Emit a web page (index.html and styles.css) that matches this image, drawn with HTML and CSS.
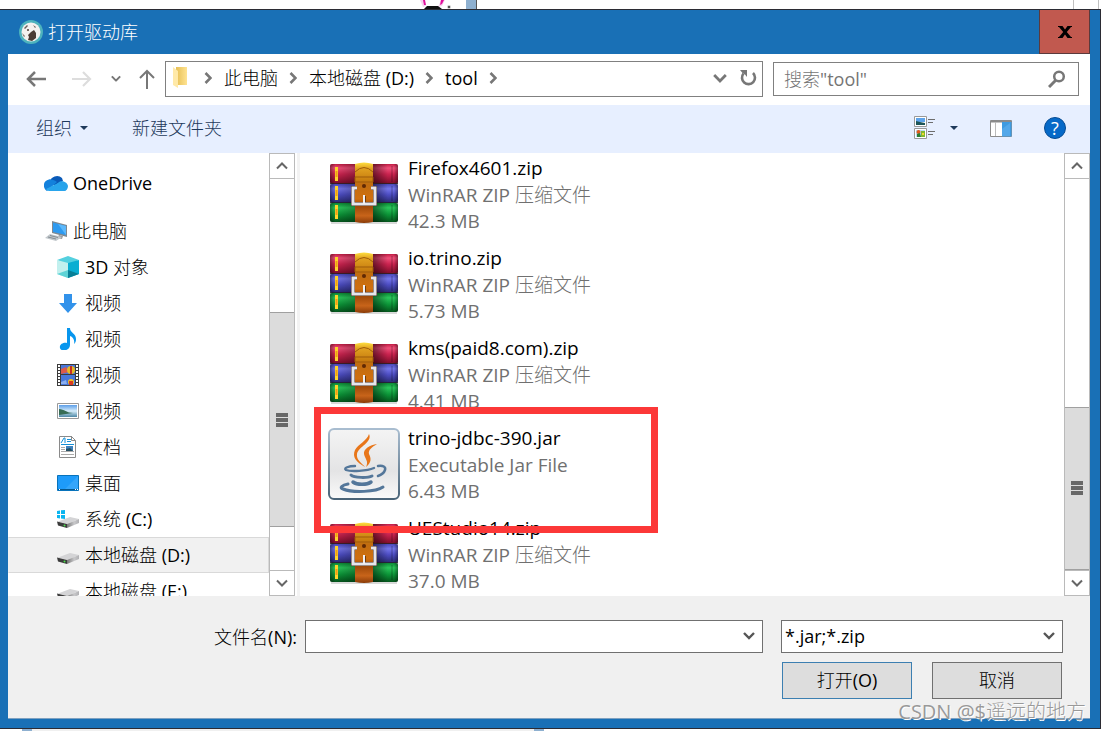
FILE: index.html
```html
<!DOCTYPE html>
<html lang="zh-CN">
<head>
<meta charset="utf-8">
<title>打开驱动库</title>
<link rel="stylesheet" href="styles.css">
</head>
<body>
<svg class="defs" aria-hidden="true">
  <defs>
    <linearGradient id="red" x1="0" y1="0" x2="0" y2="1"><stop offset="0" stop-color="#c01c44"/><stop offset=".2" stop-color="#f0507a"/><stop offset=".5" stop-color="#cc2450"/><stop offset="1" stop-color="#7a0c28"/></linearGradient>
    <linearGradient id="blue" x1="0" y1="0" x2="0" y2="1"><stop offset="0" stop-color="#4848b8"/><stop offset=".25" stop-color="#7475ea"/><stop offset=".55" stop-color="#4e4ec4"/><stop offset="1" stop-color="#28286e"/></linearGradient>
    <linearGradient id="green" x1="0" y1="0" x2="0" y2="1"><stop offset="0" stop-color="#0b8a34"/><stop offset=".25" stop-color="#2ac65a"/><stop offset=".6" stop-color="#0c9538"/><stop offset="1" stop-color="#04561c"/></linearGradient>
    <linearGradient id="shade"><stop offset="0" stop-color="#000" stop-opacity=".4"/><stop offset=".08" stop-color="#000" stop-opacity="0"/><stop offset=".3" stop-color="#000" stop-opacity=".2"/><stop offset=".62" stop-color="#000" stop-opacity=".5"/><stop offset=".85" stop-color="#000" stop-opacity="0"/><stop offset=".94" stop-color="#000" stop-opacity="0"/><stop offset="1" stop-color="#000" stop-opacity=".4"/></linearGradient>
    <linearGradient id="strap" x1="0" y1="0" x2="0" y2="1"><stop offset="0" stop-color="#ffe040"/><stop offset=".1" stop-color="#e0a020"/><stop offset=".28" stop-color="#c98010"/><stop offset=".36" stop-color="#c06c10"/><stop offset=".6" stop-color="#d0700f"/><stop offset=".72" stop-color="#9c4808"/><stop offset=".88" stop-color="#c8641a"/><stop offset="1" stop-color="#8a3c08"/></linearGradient>
    <linearGradient id="javabox" x1="0" y1="0" x2="0" y2="1"><stop offset="0" stop-color="#f4f4f4"/><stop offset=".6" stop-color="#e4e4e5"/><stop offset="1" stop-color="#fafafa"/></linearGradient>
    <linearGradient id="javaedge" x1="0" y1="0" x2="0" y2="1"><stop offset="0" stop-color="#a9bdd0"/><stop offset="1" stop-color="#4a6478"/></linearGradient>
    <linearGradient id="disk"><stop offset="0" stop-color="#777"/><stop offset=".6" stop-color="#c8c8ca"/><stop offset="1" stop-color="#b0b0b3"/></linearGradient>
    <linearGradient id="sky" x1="0" y1="0" x2="0" y2="1"><stop offset="0" stop-color="#5c9ee8"/><stop offset=".5" stop-color="#d5ecfa"/><stop offset="1" stop-color="#4d87a5"/></linearGradient>
    <linearGradient id="folder"><stop offset="0" stop-color="#e6bf55"/><stop offset="1" stop-color="#ffe391"/></linearGradient>
  </defs>
  <symbol id="rar" viewBox="0 0 72 72">
    <path d="M3 64h66v2H3z" fill="#000" opacity=".15"/>
    <rect x="2" y="6" width="68" height="20" rx="2" fill="url(#red)"/>
    <rect x="2" y="26" width="68" height="19" rx="2" fill="url(#blue)"/>
    <rect x="2" y="45" width="68" height="19" rx="2" fill="url(#green)"/>
    <rect x="2" y="6" width="68" height="58" rx="2" fill="url(#shade)"/>
    <path d="M2 25h68v1H2zM2 44h68v1H2z" fill="#222" opacity=".7"/>
    <path d="M64 8v16M64 28v15M64 47v15" stroke="#000" opacity=".3"/>
    <path d="M8.500 9v14M8.500 28v14M8.500 47v14" stroke="#ffd52b" stroke-width="3"/>
    <path d="M7.500 13h2v6h-2zM7.500 32h2v6h-2zM7.500 51h2v6h-2z" fill="#f09d18"/>
    <path d="M27 6q9-3 18 0v58q-9 2-18 0z" fill="url(#strap)"/>
    <path d="M27 14q9-9 18 0M27 19h18v5H27z" fill="none" stroke="#9d5b0a" stroke-width="1"/>
    <circle cx="36" cy="28" r="2" fill="#5f2904"/>
    <path d="M29 30h-4v16h22V30h-4" fill="none" stroke="#4a3020" stroke-width="4"/>
    <path d="M29 30h-4v16h22V30h-4" fill="none" stroke="#e6e6ec" stroke-width="3"/>
    <path d="M36 37v9" stroke="#f0f0f4" stroke-width="2"/>
    <path d="M37.500 38v6" stroke="#6a3a10" stroke-width="1"/>
  </symbol>
  <symbol id="java" viewBox="0 0 72 72">
    <rect x="1" y="1" width="70" height="70" rx="5" fill="url(#javabox)" stroke="url(#javaedge)" stroke-width="2"/>
    <path d="M41 6c4 8-11 13-12 20-1 6 5 9 8 13-9-5-13-10-10-17 3-6 12-9 14-16z" fill="#e8761a"/>
    <path d="M49 16c-7 1-14 5-13 10 1 5 5 7 2 13 6-5 5-9 3-13-1-4 3-7 8-10z" fill="#e8761a"/>
    <g fill="none" stroke="#54779a" stroke-linecap="round">
      <path d="M27 38c-6 0-12 2-9 4 5 2 21 1 28-2" stroke-width="2.400"/>
      <path d="M23 47c3 3 17 3 21 1" stroke-width="3"/>
      <path d="M25 54c4 3 14 3 18 0" stroke-width="3.500"/>
      <path d="M50 38c5-1 8 1 7 4-1 3-4 5-7 6" stroke-width="2.500"/>
      <path d="M20 56c-6 1-9 4-5 5 10 4 33 3 40-2" stroke-width="3"/>
    </g>
  </symbol>
  <symbol id="drive" viewBox="0 0 22 22">
    <path d="M1 13.500 13 9l9 2-12 5z" fill="#d4d4d6"/>
    <path d="M10 16l12-5v4l-12 5z" fill="url(#disk)"/>
    <path d="M0 13.500 10 16v4L1 17.500z" fill="#3b3b3b"/>
    <circle cx="7.500" cy="17.500" r="1" fill="#4be04b"/>
  </symbol>
  <symbol id="chev-down" viewBox="0 0 12 8"><path d="M1 1.500 6 6.500l5-5" fill="none" stroke="currentColor" stroke-width="2.400"/></symbol>
  <symbol id="chev-thin" viewBox="0 0 12 8"><path d="M1 1.500 6 6.500l5-5" fill="none" stroke="currentColor" stroke-width="2"/></symbol>
  <symbol id="chev-up" viewBox="0 0 12 8"><path d="M1 6.500 6 1.500l5 5" fill="none" stroke="currentColor" stroke-width="2"/></symbol>
  <symbol id="chev-right" viewBox="0 0 8 12"><path d="M1.500 1 6.500 6l-5 5" fill="none" stroke="currentColor" stroke-width="2.600"/></symbol>
  <symbol id="triangle" viewBox="0 0 8 4"><path d="M0 0h8L4 4z" fill="currentColor"/></symbol>
</svg>

<div class="backdrop-top">
  <svg class="rabbit" viewBox="0 0 32 9"><path d="M0 0h4l2 6-3 1zM18 7l3-7h4l-3 6z" fill="#f7d3ef"/><path d="M3 0h2l1 5H4zM20 5l1-5h3l-2 4z" fill="#e0109c"/><path d="M4 9l3-3h11l4 3z" fill="#111"/><circle cx="29" cy="7" r="2" fill="#ccc"/><path d="M28 6h2v2h-2z" fill="#555"/></svg>
  <span class="backdrop-edge"></span>
  <span class="backdrop-rail"></span>
</div>

<div class="window">
  <header class="titlebar">
    <svg class="app-icon" viewBox="0 0 24 24"><circle cx="12" cy="12" r="12" fill="#4db3bd"/><circle cx="12" cy="12" r="9.500" fill="#f3f1ef"/><path d="M9 15l3-3 3-2 2 3v5l-4 3-4-1 1-3z" fill="#4b3b34"/><path d="M5 8l3-3 1 1-3 3zM14 5l3 2-1 1zM3 13l2 4 1-1z" fill="#69605b"/><circle cx="9" cy="10" r="1" fill="#4b3b34"/></svg>
    <h1 class="title">打开驱动库</h1>
    <button class="close" aria-label="关闭"><svg viewBox="0 0 14 12"><path d="M0 0h4.500L7 3.500 9.500 0H14v1h-1L8.800 6l4.200 5h1v1H9.500L7 8.500 4.500 12H0v-1h1l4.200-5L1 1H0z" fill="#000"/></svg></button>
  </header>

  <div class="client">
    <nav class="navbar">
      <button class="nav-btn back" aria-label="后退"><svg viewBox="0 0 20 16"><path d="M9 1 2 8l7 7M2 8h18" fill="none" stroke="currentColor" stroke-width="2.500"/></svg></button>
      <button class="nav-btn forward" aria-label="前进"><svg viewBox="0 0 20 16"><path d="M11 1l7 7-7 7M18 8H0" fill="none" stroke="currentColor" stroke-width="2.200"/></svg></button>
      <button class="nav-btn recent" aria-label="最近位置"><svg viewBox="0 0 12 8"><use href="#chev-down"/></svg></button>
      <button class="nav-btn up" aria-label="上移"><svg viewBox="0 0 16 20"><path d="M1 9l7-7 7 7M8 2v18" fill="none" stroke="currentColor" stroke-width="2"/></svg></button>
      <div class="address">
        <svg class="folder" viewBox="0 0 14 21"><path d="M3 0h11v18H3z" fill="url(#folder)"/><path d="M0 0l5 4v17l-5-3z" fill="#ffe9a8"/></svg>
        <svg class="sep"><use href="#chev-right"/></svg>
        <a href="#pc">此电脑</a>
        <svg class="sep"><use href="#chev-right"/></svg>
        <a href="#d">本地磁盘 (D:)</a>
        <svg class="sep"><use href="#chev-right"/></svg>
        <a href="#tool">tool</a>
        <svg class="sep"><use href="#chev-right"/></svg>
        <button class="addr-btn history" aria-label="历史记录"><svg class="wide-chev"><use href="#chev-down"/></svg></button>
        <button class="addr-btn" aria-label="刷新"><svg class="refresh" viewBox="0 0 17 17"><path d="M3.500 4.500A6.500 6.500 0 1 0 13 4" fill="none" stroke="currentColor" stroke-width="2.600"/><path d="M0 1h7v7L5 5.500 2.500 4z" fill="currentColor"/></svg></button>
      </div>
      <div class="search">
        <input type="search" aria-label="搜索" placeholder='搜索"tool"'>
        <svg class="lens" viewBox="0 0 18 18"><circle cx="11" cy="6.500" r="4.800" fill="none" stroke="currentColor" stroke-width="2.500"/><path d="M7.500 10.500 1 17" stroke="currentColor" stroke-width="3"/></svg>
      </div>
    </nav>

    <div class="toolbar">
      <button class="tool organize">组织<svg class="tri"><use href="#triangle"/></svg></button>
      <button class="tool">新建文件夹</button>
      <button class="tool view" aria-label="更改视图">
        <svg class="view-icon" viewBox="0 0 21 24"><path d="M.5.5h12v10H.5zM.5 12.500h12v10H.5z" fill="#fff" stroke="#999"/><path d="M2 2h9v4H2z" fill="#5da3ea"/><path d="M2 5l4 1 5 1v2H2z" fill="#1d5558"/><path d="M2 14h9v7H2z" fill="#b9dcf5"/><circle cx="4.500" cy="16" r="2" fill="#e05a1c"/><path d="M3 18l3-1 1 4H3z" fill="#2b7c32"/><path d="M7 15h4v6H7z" fill="#82b82f"/><path d="M8 17h2v2H8z" fill="#f4d82c"/><path d="M14 3.500h7M14 6.500h5M14 15.500h7M14 18.500h5" stroke="#6d6d6d"/></svg>
        <svg class="tri"><use href="#triangle"/></svg>
      </button>
      <button class="tool pane" aria-label="预览窗格"><svg class="pane-icon" viewBox="0 0 22 17"><path d="M.5.500h21v16H.500z" fill="#fff" stroke="#8b8b8b"/><path d="M1 1h20v1.500H1z" fill="#8b8b8b"/><path d="M5.500 2v14" stroke="#bbb"/><path d="M12 2h9.500v14.500H12z" fill="#3f9be0"/><path d="M12 9l8-6v13h-8z" fill="#62b1ee" opacity=".6"/></svg></button>
      <button class="tool help" aria-label="帮助"><span class="help-mark">?</span></button>
    </div>

    <main class="panes">
      <ul class="tree">
        <li class="root"><svg viewBox="0 0 24 16"><path d="M6 7a7 6.500 0 0 1 12-4l1 3-8 5z" fill="#0a5ab8"/><path d="M5 4.500C7 4 10 5 13 7L3 16C-1 14-2 6 5 4.500z" fill="#1381dc"/><path d="M14 8c2-3 9-2 10 3 0 3-2 5-4 5H5z" fill="#28a3ea"/><path d="M2 14 14 8l8 7q-1 1-3 1H5q-2 0-3-2z" fill="#29a5ec"/></svg>OneDrive</li>
        <li class="root second"><svg viewBox="0 0 24 22"><path d="M8 1l15 4v12L8 13z" fill="#7e8992"/><path d="M9 2.500l13 3.500v9L9 12z" fill="#2e9af0"/><path d="M14 4l8 2v9z" fill="#5cb8fb"/><path d="M15 15l-2 3 5 1 1-3z" fill="#999"/><path d="M6 14l12 3-6 4-11-3z" fill="#c2c8cc"/><path d="M4 17l8 2M6 15.500l8 2" stroke="#858d93"/></svg>此电脑</li>
        <li><svg viewBox="0 0 22 22"><path d="M11 0l11 4-11 5L0 4z" fill="#54d0df"/><path d="M0 4l11 3v15L0 18z" fill="#c2f0ee"/><path d="M11 7l11-3v14l-11 4z" fill="#0aaed2"/><path d="M0 18l11-4v8z" fill="#5ed3d6"/><path d="M11 14l11 4-11 4z" fill="#087f96"/></svg>3D 对象</li>
        <li><svg viewBox="0 0 22 22"><path d="M7 2h8v9h5l-9 10-9-10h5z" fill="#3292ea"/></svg>视频</li>
        <li><svg viewBox="0 0 22 22"><path d="M10 0h3c0 5 6 5 6 11 0 3-1 4-2 5 1-4-1-7-4-8v9c0 6-9 7-10 3-1-4 4-6 7-5z" fill="#0796ee"/></svg>视频</li>
        <li><svg viewBox="0 0 22 22"><path d="M0 0h22v22H0z" fill="#3b3b3b"/><path d="M4 1h14v9H4zM4 11h14v10H4z" fill="#4777da"/><path d="M4 5l5-2 3 5-8 2z" fill="#db594b"/><circle cx="14" cy="6" r="4" fill="#e5b824"/><path d="M13 2h2v8h-2z" fill="#c52e25"/><path d="M4 18l5-2 1 4H4z" fill="#8bb0f0"/><circle cx="14" cy="18" r="3" fill="#efbf25"/><path d="M12 17h4v4h-4z" fill="#d83a20"/><path d="M2 1v20M20 1v20" stroke="#fff" stroke-width="2" stroke-dasharray="2 1"/></svg>视频</li>
        <li><svg viewBox="0 0 22 22"><path d="M.5 3.500h21v15H.500z" fill="#fff" stroke="#999"/><path d="M2 5h18v12H2z" fill="url(#sky)"/><path d="M2 9c5 0 8 4 14 4L2 15z" fill="#376c55"/></svg>视频</li>
        <li><svg viewBox="0 0 22 22"><path d="M2.500.500h12l4 4v17h-16z" fill="#fff" stroke="#8a8a8a"/><path d="M14.500 0v4.500h4" fill="none" stroke="#8a8a8a"/><path d="M4 7l3-5h1v5M10 3.500h4M10 5.500h4M4 8.500h13" stroke="#1590d8" fill="none"/><path d="M4 11.500h4M4 13.500h4M4 15.500h13M4 18.500h13" stroke="#aaa"/><path d="M9 10h7v5H9z" fill="#3e81bc"/><path d="M9 13l4-1 3 3H9z" fill="#264f61"/></svg>文档</li>
        <li><svg viewBox="0 0 22 22"><path d="M.5 3.500h21v15H.500z" fill="#1e9bfa" stroke="#0873bb"/><path d="M8 17L21 4v13z" fill="#45adfb" opacity=".6"/><path d="M1 17.500h20" stroke="#07588f"/><path d="M2 17.500h1M18 17.500h1M20 17.500h1" stroke="#fff"/></svg>桌面</li>
        <li><svg viewBox="0 0 22 22"><use href="#drive"/><path d="M0 3l3-.5v3.500H0zM4 2.300 8 2v4H4zM0 7h3v3.500L0 10zM4 7h4v4l-4-.5z" fill="#0bb5f0"/></svg>系统 (C:)</li>
        <li class="selected"><svg viewBox="0 0 22 22"><use href="#drive"/></svg>本地磁盘 (D:)</li>
        <li><svg viewBox="0 0 22 22"><use href="#drive"/></svg>本地磁盘 (E:)</li>
      </ul>
      <div class="scrollbar tree-scroll">
        <button aria-label="向上滚动"><svg><use href="#chev-up"/></svg></button>
        <span class="before"></span><span class="thumb"><i></i><i></i><i></i></span><span class="after"></span>
        <button aria-label="向下滚动"><svg><use href="#chev-thin"/></svg></button>
      </div>
      <div class="splitter"></div>
      <ul class="files">
        <li><svg><use href="#rar"/></svg><div><p class="name">Firefox4601.zip</p><p>WinRAR ZIP 压缩文件</p><p>42.3 MB</p></div></li>
        <li><svg><use href="#rar"/></svg><div><p class="name">io.trino.zip</p><p>WinRAR ZIP 压缩文件</p><p>5.73 MB</p></div></li>
        <li><svg><use href="#rar"/></svg><div><p class="name">kms(paid8.com).zip</p><p>WinRAR ZIP 压缩文件</p><p>4.41 MB</p></div></li>
        <li class="marked"><svg><use href="#java"/></svg><div><p class="name">trino-jdbc-390.jar</p><p>Executable Jar File</p><p>6.43 MB</p></div></li>
        <li><svg><use href="#rar"/></svg><div><p class="name">UEStudio14.zip</p><p>WinRAR ZIP 压缩文件</p><p>37.0 MB</p></div></li>
      </ul>
      <div class="scrollbar file-scroll">
        <button aria-label="向上滚动"><svg><use href="#chev-up"/></svg></button>
        <span class="before"></span><span class="thumb"><i></i><i></i><i></i></span>
        <button aria-label="向下滚动"><svg><use href="#chev-thin"/></svg></button>
      </div>
    </main>

    <footer class="footer">
      <div class="fields">
        <label for="filename">文件名(N):</label>
        <div class="combo filename"><input id="filename" type="text"><svg><use href="#chev-down"/></svg></div>
        <div class="combo filter"><select aria-label="文件类型"><option>*.jar;*.zip</option></select><svg><use href="#chev-down"/></svg></div>
      </div>
      <div class="actions">
        <button class="action primary">打开(O)</button>
        <button class="action">取消</button>
      </div>
    </footer>
  </div>
  <p class="watermark">CSDN @$遥远的地方</p>
</div>

<div class="backdrop-bottom"><span></span></div>
</body>
</html>
```

FILE: styles.css
```css
*, *::before, *::after { box-sizing: border-box; }

body {
  margin: 0;
  height: 100vh;
  display: flex;
  flex-direction: column;
  overflow: hidden;
  background: #fff;
  color: #000;
  font: 18px/26px "Open Sans", "Noto Sans CJK SC Light", "Noto Sans CJK SC DemiLight", "Noto Sans CJK SC", sans-serif;
}

button, input, select { font: inherit; color: inherit; }
button { border: 0; padding: 0; background: none; }
ul, p, h1 { margin: 0; padding: 0; list-style: none; }
a { color: inherit; text-decoration: none; }
svg { flex: none; display: block; }
.defs { width: 0; height: 0; position: absolute; }

.backdrop-top { height: 9px; flex: none; display: flex; }
.rabbit { width: 32px; height: 9px; margin-left: 420px; }
.backdrop-edge { width: 11px; margin-left: 14px; background: #8eb0d0; border-right: 1px solid #555; }
.backdrop-rail { width: 26px; margin: 0 2px 0 auto; border: solid #c0c0c0; border-width: 0 1px; }
.backdrop-bottom { height: 2px; flex: none; padding-left: 22px; }
.backdrop-bottom span { display: block; width: 522px; height: 2px; background: #f0f0f0; border: solid #8eb0d0; border-width: 0 10px; }

.window {
  position: relative;
  flex: 1;
  min-height: 0;
  display: flex;
  flex-direction: column;
  padding: 0 10px 9px 8px;
  border: 1px solid #2b2b33;
  border-left: 0;
  background: #1970b6;
}

.titlebar { height: 44px; flex: none; display: flex; align-items: center; padding-left: 11px; color: #fff; }
.app-icon { width: 24px; height: 24px; }
.title { flex: 1; margin-left: 5px; font-size: 18px; font-weight: 400; }
.close { width: 51px; height: 44px; display: grid; place-items: center; background: #c1594f; border: 1px solid #5b3a3c; border-top: 0; }
.close svg { width: 14px; height: 12px; }

.client { flex: 1; min-height: 0; display: flex; flex-direction: column; background: #fff; border-bottom: 1px solid #7da0c0; }

.navbar { height: 51px; flex: none; display: flex; align-items: center; padding: 0 11px 2px 0; color: #777; }
.nav-btn { display: grid; place-items: center; height: 32px; }
.nav-btn svg { width: 20px; height: 16px; }
.back { margin-left: 18px; }
.forward { margin-left: 26px; color: #ddd; }
.recent { margin-left: 19px; }
.recent svg { width: 10px; height: 7px; }
.up { margin-left: 18px; }
.up svg { width: 16px; height: 20px; }

.address { flex: 1; height: 36px; display: flex; align-items: center; margin-left: 10px; padding: 0 0 2px 7px; border: 1px solid #808080; color: #777; }
.address a { color: #000; }
.folder { width: 14px; height: 21px; margin-right: 6px; }
.sep { width: 8px; height: 12px; margin: 0 12px 0 11px; }
.addr-btn { width: 28px; display: grid; place-items: center; }
.history { margin-left: auto; }
.wide-chev { width: 14px; height: 10px; }
.refresh { width: 17px; height: 17px; }

.search { width: 306px; height: 34px; margin-left: 10px; display: flex; align-items: center; padding-right: 12px; border: 1px solid #808080; }
.search input { flex: 1; min-width: 0; padding: 0 0 0 10px; border: 0; outline: 0; background: none; }
.search input::placeholder { color: #757575; opacity: 1; }
.lens { width: 18px; height: 18px; }

.toolbar { height: 48px; flex: none; display: flex; align-items: center; padding: 0 24px 2px 28px; background: #e7efff; color: #1e395b; }
.tool { display: flex; align-items: center; }
.tri { width: 8px; height: 4px; }
.organize { gap: 8px; margin-right: 44px; }
.view { margin-left: auto; gap: 15px; }
.view-icon { width: 21px; height: 24px; }
.pane { margin-left: 32px; }
.pane-icon { width: 22px; height: 17px; }
.help { margin-left: 32px; }
.help-mark { width: 22px; height: 22px; border-radius: 50%; background: #0669c8; border: 1px solid #064b93; color: #fff; font-size: 18px; line-height: 20px; text-align: center; }

.panes { flex: 1; min-height: 0; display: flex; overflow: hidden; }

.tree { width: 261px; padding-top: 12px; overflow: hidden; }
.tree li { height: 36px; display: flex; align-items: center; gap: 6px; padding-left: 48px; border: 1px solid transparent; white-space: nowrap; }
.tree svg { width: 22px; height: 22px; }
.tree .root { padding-left: 35px; gap: 5px; }
.tree .root svg { width: 24px; }
.tree .second { margin-top: 12px; }
.tree .selected { background: #f1f1f1; border-color: #d9d9d9; border-left-color: #f1f1f1; }

.scrollbar { width: 26px; flex: none; display: flex; flex-direction: column; border: 1px solid #bababa; background: #fff; color: #666; }
.scrollbar button { height: 25px; flex: none; display: grid; place-items: center; }
.scrollbar svg { width: 12px; height: 8px; }
.scrollbar button:first-child { border-bottom: 1px solid #bababa; }
.scrollbar button:last-child { border-top: 1px solid #bababa; }
.thumb { display: flex; flex-direction: column; align-items: center; justify-content: center; gap: 1px; background: #dcdcdc; border: solid #a0a0a0; border-width: 1px 0; }
.thumb i { width: 12px; height: 4px; background: #686868; }
.tree-scroll .before { flex: 134 0 0; }
.tree-scroll .thumb { flex: 214 0 0; }
.tree-scroll .after { flex: 43 0 0; }
.file-scroll .before { flex: 229 0 0; }
.file-scroll .thumb { flex: 162 0 0; }
.splitter { width: 5px; flex: none; background: linear-gradient(90deg, #fff 50%, #f3f3f3 50%); }

.files { flex: 1; margin-top: -4px; padding-left: 28px; font-size: 19px; }
.files li { position: relative; height: 90px; display: flex; align-items: center; gap: 8px; color: #707070; white-space: nowrap; }
.files li > svg { width: 72px; height: 72px; }
.files .name { margin-bottom: 1px; color: #000; }
.marked::after { content: ""; position: absolute; z-index: 1; left: -14px; top: -12px; width: 344px; height: 126px; border: 7px solid #fc3838; }

.footer { flex: none; display: flex; flex-direction: column; gap: 9px; padding: 24px 27px 19px 28px; background: #f0f0f0; z-index: 1; }
.fields { display: flex; align-items: center; }
.fields label { flex: 0 0 261px; text-align: right; }
.combo { display: grid; grid-template-columns: 1fr 12px; align-items: center; height: 33px; padding: 0 7px 2px 0; background: #fff; border: 1px solid #707070; color: #555; }
.combo input, .combo select { grid-area: 1 / 1 / 2 / 3; min-width: 0; width: 100%; padding: 0 16px 0 3px; border: 0; outline: 0; appearance: none; background: none; color: #000; }
.combo svg { grid-area: 1 / 2; width: 12px; height: 9px; pointer-events: none; }
.filename { flex: 1; margin: 0 18px 0 8px; }
.filter { width: 282px; }
.actions { display: flex; justify-content: flex-end; gap: 20px; padding-right: 1px; }
.action { width: 130px; height: 37px; padding-bottom: 2px; background: #ddd; border: 1px solid #707070; }
.primary { border-color: #3c7fb1; }

.watermark { position: absolute; z-index: 2; right: 14px; bottom: 3px; color: #999; font-size: 20px; text-shadow: 1px 1px 0 #fff; white-space: nowrap; }
```
